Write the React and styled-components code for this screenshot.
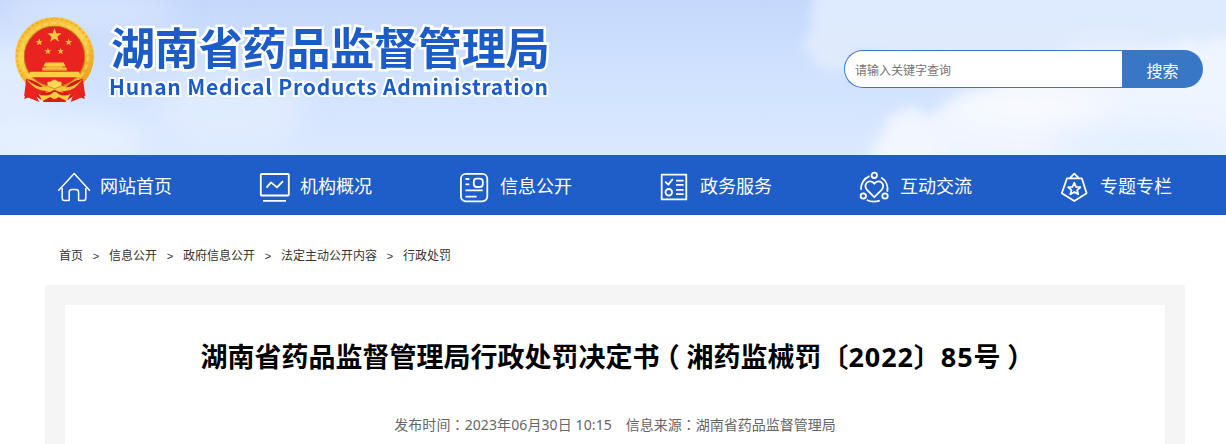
import styled, { createGlobalStyle } from "styled-components";

const GlobalStyle = createGlobalStyle`
  * {
    box-sizing: border-box;
  }

  body {
    margin: 0;
    background: #fff;
    font-family: "Noto Sans", "Noto Sans CJK SC", sans-serif;
    overflow: hidden;
  }
`;

const Page = styled.div`
  width: 1226px;
  height: 444px;
  overflow: hidden;
`;

const Header = styled.header`
  position: relative;
  display: flex;
  justify-content: space-between;
  height: 155px;
  padding: 0 23px 0 14px;
  background: linear-gradient(#c4d8fc, #d0e2fe 50%, #dbe9ff);
`;

// sits behind the header content
const Sky = styled.svg`
  position: absolute;
  top: 0;
  left: 0;
`;

const Brand = styled.div`
  position: relative;
  display: flex;
`;

const EmblemIcon = styled.svg`
  margin-top: 16px;
`;

const BrandText = styled.div`
  margin: 18px 0 0 14px;
  color: #1c5cc9;
  font-family: "Noto Sans CJK SC", sans-serif;
  white-space: nowrap;
  paint-order: stroke fill;
`;

const BrandName = styled.div`
  padding-left: 2px;
  font-size: 44px;
  font-weight: 700;
  line-height: 56px;
  letter-spacing: -0.15px;
  -webkit-text-stroke: 5px #fff;
`;

const BrandSub = styled.div`
  font-size: 21px;
  font-weight: 700;
  line-height: 24px;
  letter-spacing: 0.8px;
  -webkit-text-stroke: 4px #fff;
`;

const Search = styled.form`
  position: relative;
  display: flex;
  width: 359px;
  height: 38px;
  margin-top: 50px;
`;

const SearchInput = styled.input`
  flex: 1;
  min-width: 0;
  padding: 0 10px;
  border: 1px solid #3777c6;
  border-right: 0;
  border-radius: 19px 0 0 19px;
  background: #fff;
  font-family: "Noto Sans CJK SC", sans-serif;
  font-size: 12px;
  outline: none;

  &::placeholder {
    color: #757575;
  }
`;

const SearchButton = styled.button`
  width: 81px;
  padding: 1px 0 0;
  border: 0;
  border-radius: 0 19px 19px 0;
  background: #3777c6;
  color: #fff;
  font-family: "Noto Sans CJK SC", sans-serif;
  font-size: 16px;
`;

const Nav = styled.nav`
  display: flex;
  height: 60px;
  padding-left: 13px;
  background: #1f5ec9;
`;

const NavItem = styled.a`
  display: flex;
  flex: 0 0 200px;
  padding-left: 44px;
  color: #fff;
  font-size: 18px;
  line-height: 62px;

  svg {
    margin: 15px 9px 0 0;
  }
`;

const Breadcrumb = styled.div`
  display: flex;
  height: 70px;
  padding: 31px 0 0 59px;
  color: #333;
  font-size: 12px;
  line-height: 20px;
`;

const Separator = styled.span`
  width: 26px;
  text-align: center;
  font-family: "Liberation Sans", sans-serif;
  font-size: 11px;
`;

const Panel = styled.main`
  width: 1140px;
  height: 159px;
  margin-left: 45px;
  padding: 20px 20px 0;
  background: #f5f5f5;
`;

const Article = styled.article`
  height: 139px;
  background: #fff;
  text-align: center;
`;

const Title = styled.h1`
  margin: 0;
  padding: 31px 2px 0 0;
  color: #000;
  font-size: 27px;
  font-weight: 700;
  line-height: 40px;
  white-space: nowrap;
`;

const Digits = styled.span`
  letter-spacing: 0.9px;
`;

// half-width form with even padding, so the bracket is centred in its cell
const Bracket = styled.span`
  padding: 0 6.75px;
  font-family: "Noto Sans CJK SC", sans-serif;
  font-feature-settings: "halt";
`;

const Meta = styled.div`
  display: flex;
  justify-content: center;
  gap: 14px;
  margin-top: 37px;
  color: #666;
  font-size: 14px;
  line-height: 20px;
`;

const Time = styled.span`
  letter-spacing: 0.1px;
`;

// the TC face has its colon in the middle of the cell
const Colon = styled.span`
  font-family: "Noto Sans CJK TC", sans-serif;
`;

const Clouds = () => (
  <Sky width="1226" height="155" viewBox="0 0 1226 155">
    <defs>
      <filter id="soft" x="-30%" y="-100%" width="160%" height="300%">
        <feGaussianBlur stdDeviation="14" />
      </filter>
      <filter id="puff" x="-20%" y="-40%" width="140%" height="180%">
        <feTurbulence type="fractalNoise" baseFrequency="0.035" numOctaves="4" seed="8" />
        <feDisplacementMap in="SourceGraphic" scale="28" xChannelSelector="R" yChannelSelector="G" />
        <feGaussianBlur stdDeviation="6" />
      </filter>
    </defs>
    <g fill="#f0f5ff" filter="url(#soft)">
      <ellipse cx="90" cy="10" rx="90" ry="20" opacity="0.4" />
      <ellipse cx="5" cy="75" rx="50" ry="40" opacity="0.5" />
      <ellipse cx="60" cy="140" rx="90" ry="28" opacity="0.6" />
      <ellipse cx="230" cy="110" rx="75" ry="40" opacity="0.4" />
    </g>
    <path d="M817 -30H1270V100H1040L1000 85L950 60L900 55L855 52L850 72L815 75L808 45Z" fill="#e3edfe" opacity="0.85" filter="url(#puff)" />
    <path d="M868 185L866 150L878 132L894 113L950 108L985 95L1010 70L1080 52L1270 40V185Z" fill="#eff5ff" filter="url(#puff)" />
    <g fill="#f9fbff" filter="url(#soft)">
      <ellipse cx="1030" cy="108" rx="80" ry="22" opacity="0.8" />
      <ellipse cx="910" cy="142" rx="30" ry="14" opacity="0.5" />
      <ellipse cx="1110" cy="50" rx="50" ry="8" opacity="0.5" />
    </g>
    <ellipse cx="1150" cy="145" rx="100" ry="16" fill="#dceafe" opacity="0.7" filter="url(#soft)" />
  </Sky>
);

const STAR = "M0 -1L0.24 -0.32L0.95 -0.31L0.38 0.12L0.59 0.81L0 0.4L-0.59 0.81L-0.38 0.12L-0.95 -0.31L-0.24 -0.32Z";

const smallStars = [
  [25, 26, 3.7],
  [54, 26, 3.7],
  [33.5, 35, 3.6],
  [46, 35, 3.6],
];

const Emblem = () => (
  <EmblemIcon width="81" height="89" viewBox="0 0 80 88">
    <defs>
      <linearGradient id="gold" x1="0" y1="0" x2="0.4" y2="1">
        <stop offset="0" stopColor="#f3b832" />
        <stop offset="0.5" stopColor="#fbd04a" />
        <stop offset="1" stopColor="#e99d16" />
      </linearGradient>
    </defs>
    <circle cx="40" cy="40" r="39" fill="url(#gold)" />
    <circle cx="40" cy="40" r="37" fill="none" stroke="#edb02c" strokeWidth="2" strokeDasharray="3 2" />
    <circle cx="40" cy="40" r="33" fill="none" stroke="#ffdc62" strokeWidth="2" strokeDasharray="5 3" opacity="0.6" />
    <circle cx="40" cy="40" r="29.8" fill="#e92420" stroke="#b87318" strokeWidth="1" />
    <path d={STAR} transform="translate(40 19.5) scale(7.5)" fill="#f6c944" />
    {smallStars.map(([x, y, r]) => (
      <path key={`${x}${y}`} d={STAR} transform={`translate(${x} ${y}) scale(${r})`} fill="#f2bd3e" />
    ))}
    <path d="M31 46H49L51 50H48V50.8H52V54H28V50.8H32V50H29Z" fill="#fbcd43" />
    <path d="M31 50.4H49M29 52.6H51" stroke="#dd7b1b" strokeWidth="0.6" />
    <path d="M16 55H64L67 60.5H13Z" fill="#fbcd43" />
    <path d="M12 62Q24 64 32 74L27 83L20 78L10 82Q14 72 12 62Z" fill="#cf1718" />
    <path d="M68 62Q56 64 48 74L53 83L60 78L70 82Q66 72 68 62Z" fill="#cf1718" />
    <path d="M12 62L10 79L25 85L22 79L35 73Q25 73 12 62ZM68 62L70.5 79L56 85L58 79L45 73Q57 73 68 62Z" fill="#e92420" />
    <path d="M12 62Q23 72 33 70L40 64L48 70Q58 72 68 62Q59 76 47 74L40 79L33 74Q21 75 12 62Z" fill="#f9c53a" />
    <path d="M33 69Q32 64 36 65Q40 61 44 65Q48 64 47 69L40 72Z" fill="#ffd85b" stroke="#cd7018" strokeWidth="0.7" />
    <path d="M27 76Q34 77 40 73Q47 77 53 76L51 85H29Z" fill="#d81b19" />
    <path d="M24 77Q31 80 37 77Q40 73 44 77Q49 80 56 77L52 84L44 80Q40 84 36 80L28 84Z" fill="#fbcd43" />
  </EmblemIcon>
);

const icons = {
  home: (
    <>
      <path d="M1.3 20.8L17.2 3.6L32.9 20.8" />
      <path d="M5.2 18V28.3Q5.2 30.4 7.2 30.4H12.2V22.2Q12.2 19.5 15 19.5H18.8Q21.6 19.5 21.6 22.2V30.4H26.8Q28.8 30.4 28.8 28.3V18" />
    </>
  ),
  monitor: (
    <>
      <rect x="3.8" y="4" width="28" height="21.5" rx="0.8" />
      <path d="M9.5 17.6L14 12.4L20 17.4L26 11.2M6 30.8H29" />
    </>
  ),
  document: (
    <>
      <rect x="3.9" y="3.9" width="26.4" height="27.4" rx="5" />
      <rect x="16.8" y="8.6" width="9" height="8.4" rx="3" />
      <path d="M8.5 9H12.3M8.5 14.3H12.3M8.5 20.4H25.7M8.5 26.6H19.6" />
    </>
  ),
  checklist: (
    <>
      <rect x="4.7" y="4.6" width="24.6" height="24.8" />
      <path d="M8.2 11.7L11.3 14.6L15.8 9M19 10.7H26.6M19 14.9H26.6M19 19.8H26.6M19 24.2H26.6" />
      <circle cx="11.8" cy="22.3" r="3.3" />
    </>
  ),
  heart: (
    <>
      <circle cx="17.3" cy="5.3" r="2.7" />
      <circle cx="6.3" cy="26" r="2.7" />
      <circle cx="28" cy="26" r="2.7" />
      <path d="M12.6 6.2A13.6 13.6 0 0 0 4 19.8M24.2 7.6A13.6 13.6 0 0 1 30.3 21.8M9.8 30A17 17 0 0 0 22.7 30.6" />
      <path d="M17.3 27.2L10 19.8C5.2 14.6 12.3 7.8 17.3 13.7C22.3 7.8 29.4 14.6 24.6 19.8Z" />
    </>
  ),
  badge: (
    <>
      <path d="M10 8.3H24.8L29.6 23.3L17.3 31L4.8 23.3ZM12.8 8.2L17.3 3.6L21.8 8.2" />
      <path d="M17.3 12.8L19.1 16.9L23.4 17.2L20.1 20.1L21.2 24.3L17.3 22L13.4 24.3L14.5 20.1L11.2 17.2L15.5 16.9Z" />
    </>
  ),
};

const navItems = [
  { icon: "home", label: "网站首页" },
  { icon: "monitor", label: "机构概况" },
  { icon: "document", label: "信息公开" },
  { icon: "checklist", label: "政务服务" },
  { icon: "heart", label: "互动交流" },
  { icon: "badge", label: "专题专栏" },
];

const NavIcon = ({ name }) => (
  <svg
    width="34"
    height="34"
    viewBox="0 0 34 34"
    fill="none"
    stroke="#fff"
    strokeWidth={name === "home" ? 1.5 : 1.8}
    strokeLinejoin="round"
  >
    {icons[name]}
  </svg>
);

const crumbs = ["首页", "信息公开", "政府信息公开", "法定主动公开内容", "行政处罚"];

export default function App() {
  return (
    <Page>
      <GlobalStyle />
      <Header>
        <Clouds />
        <Brand>
          <Emblem />
          <BrandText>
            <BrandName>湖南省药品监督管理局</BrandName>
            <BrandSub>Hunan Medical Products Administration</BrandSub>
          </BrandText>
        </Brand>
        <Search>
          <SearchInput placeholder="请输入关键字查询" />
          <SearchButton type="button">搜索</SearchButton>
        </Search>
      </Header>
      <Nav>
        {navItems.map(({ icon, label }) => (
          <NavItem key={icon}>
            <NavIcon name={icon} />
            {label}
          </NavItem>
        ))}
      </Nav>
      <Breadcrumb>
        {crumbs.map((crumb, i) => [
          i > 0 && <Separator key={`${crumb}-sep`}>&gt;</Separator>,
          <span key={crumb}>{crumb}</span>,
        ])}
      </Breadcrumb>
      <Panel>
        <Article>
          <Title>
            湖南省药品监督管理局行政处罚决定书<Bracket>（</Bracket>湘药监械罚〔<Digits>2022</Digits>〕<Digits>85</Digits>号<Bracket>）</Bracket>
          </Title>
          <Meta>
            <Time>发布时间<Colon>：</Colon>2023年06月30日 10:15</Time>
            <span>信息来源<Colon>：</Colon>湖南省药品监督管理局</span>
          </Meta>
        </Article>
      </Panel>
    </Page>
  );
}
